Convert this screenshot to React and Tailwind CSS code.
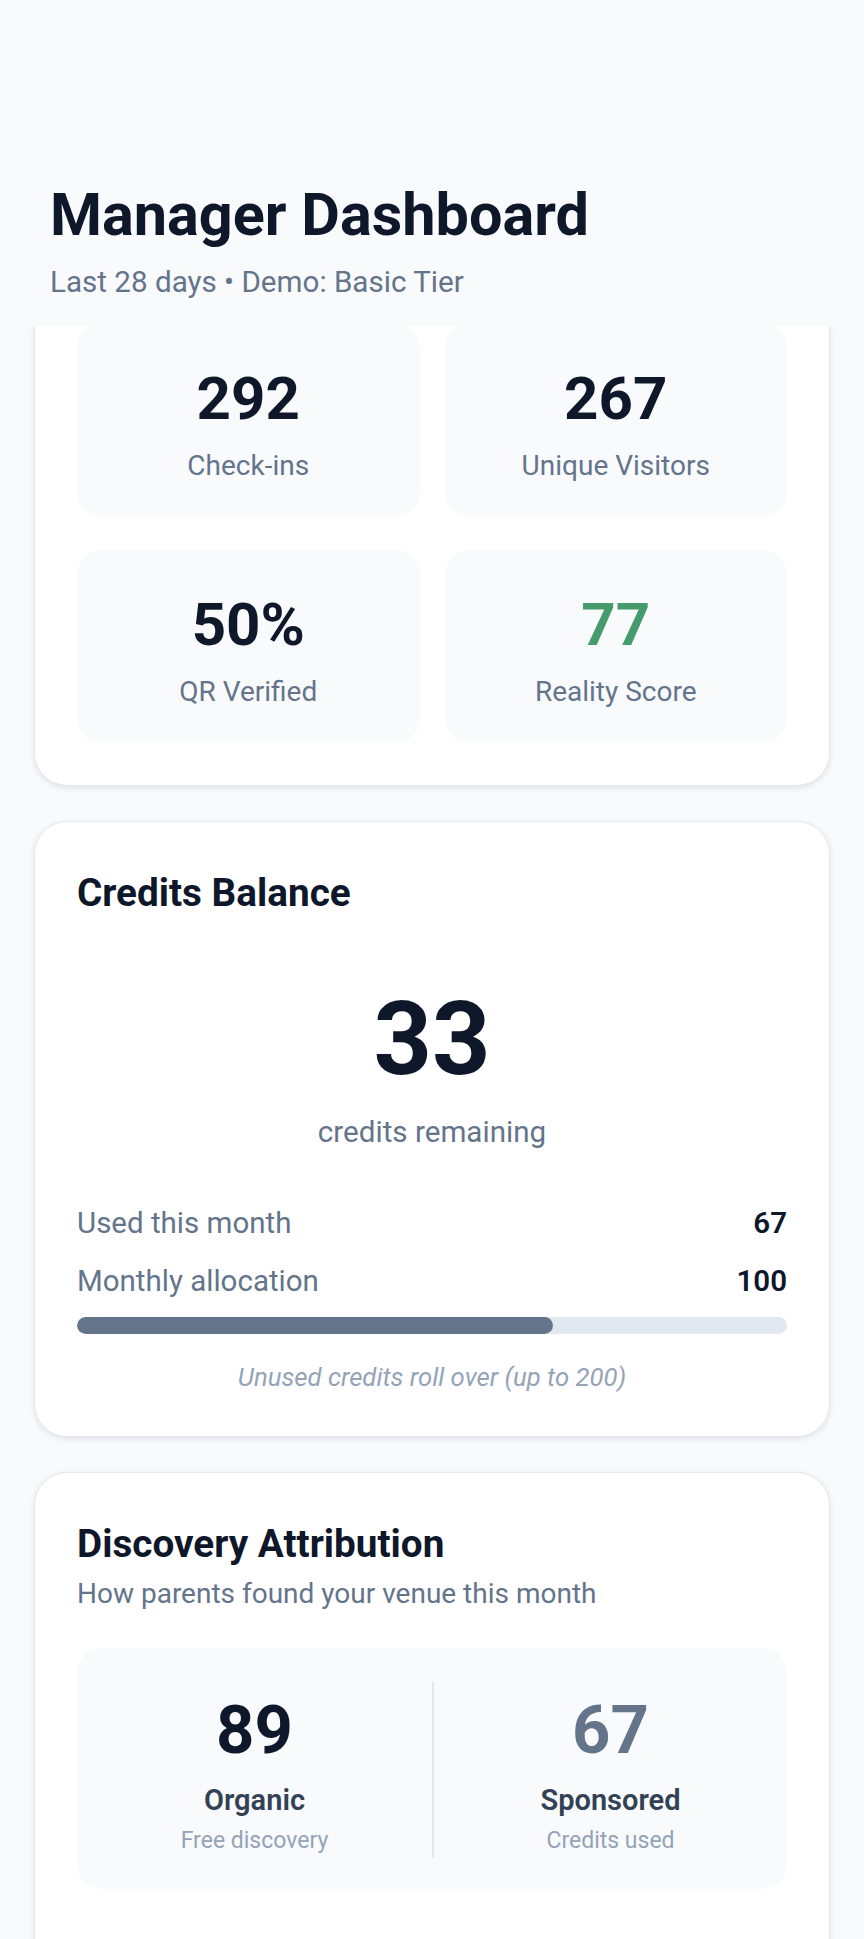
import React from 'react';

const stats = [
  { value: '292', label: 'Check-ins', color: 'text-[#0f172a]' },
  { value: '267', label: 'Unique Visitors', color: 'text-[#0f172a]' },
  { value: '50%', label: 'QR Verified', color: 'text-[#0f172a]' },
  { value: '77', label: 'Reality Score', color: 'text-[#469b6c]' },
];

function StatCard({ value, label, color }) {
  return (
    <div className="bg-[#f8fafc] rounded-[25px] pt-[39px] pb-[31px] flex flex-col items-center">
      <div className={`text-[60px] leading-[72px] font-bold ${color}`}>{value}</div>
      <div className="mt-[11px] text-[28px] leading-[40px] text-[#64748b]">{label}</div>
    </div>
  );
}

export default function App() {
  const used = 67;
  const allocation = 100;

  return (
    <div className="min-h-screen bg-[#f8fafc] font-['Roboto',sans-serif] pb-[60px]">
      <div className="relative z-10 bg-[#f8fafc] pt-[180px] pb-[23px] px-[50px]">
        <h1 className="text-[59.4px] leading-[71px] font-bold text-[#0f172a]">Manager Dashboard</h1>
        <p className="mt-[10px] text-[29.6px] leading-[42px] text-[#64748b]">Last 28 days • Demo: Basic Tier</p>
      </div>

      <div className="mx-[34px] flex flex-col gap-[35px]">
        {/* overview stats, top scrolled under the header */}
        <div className="bg-white border-x border-b border-[#e2e8f0] rounded-b-[33px] px-[42px] pb-[42px] shadow-[0_2px_6px_rgba(15,23,42,0.10)]">
          <div className="-mt-[2px] grid grid-cols-2 gap-x-[25px] gap-y-[33px]">
            {stats.map(s => (
              <StatCard key={s.label} {...s} />
            ))}
          </div>
        </div>

        {/* credits */}
        <div className="bg-white border border-[#e2e8f0] rounded-[33px] p-[42px] shadow-[0_2px_6px_rgba(15,23,42,0.10)]">
          <h2 className="text-[38.7px] leading-[58px] font-bold text-[#0f172a]">Credits Balance</h2>
          <div className="mt-[66px] flex flex-col items-center">
            <div className="text-[102px] leading-[102px] font-bold text-[#0f172a]">33</div>
            <div className="mt-[21px] text-[29.6px] leading-[42px] text-[#64748b]">credits remaining</div>
          </div>
          <div className="mt-[49px] flex flex-col gap-[16px]">
            <div className="flex justify-between items-center text-[29.5px] leading-[42px]">
              <span className="text-[#64748b]">Used this month</span>
              <span className="font-semibold text-[#0f172a]">{used}</span>
            </div>
            <div className="flex justify-between items-center text-[29.5px] leading-[42px]">
              <span className="text-[#64748b]">Monthly allocation</span>
              <span className="font-semibold text-[#0f172a]">{allocation}</span>
            </div>
          </div>
          <div className="mt-[15px] h-[17px] rounded-full bg-[#e2e8f0] overflow-hidden">
            <div className="h-full rounded-full bg-[#64748b]" style={{ width: `${(used / allocation) * 100}%` }} />
          </div>
          <p className="mt-[26px] text-center italic text-[25.7px] leading-[34px] text-[#94a3b8]">
            Unused credits roll over (up to 200)
          </p>
        </div>

        {/* discovery attribution */}
        <div className="bg-white border border-[#e2e8f0] rounded-[33px] px-[42px] pt-[42px] pb-[120px] shadow-[0_2px_6px_rgba(15,23,42,0.10)]">
          <h2 className="text-[38.7px] leading-[58px] font-bold text-[#0f172a]">Discovery Attribution</h2>
          <p className="text-[28px] leading-[42px] text-[#64748b]">How parents found your venue this month</p>
          <div className="mt-[33px] bg-[#f8fafc] rounded-[25px] pt-[34px] pb-[31px] grid grid-cols-2">
            <div className="flex flex-col items-center">
              <div className="text-[67px] leading-[97px] font-bold text-[#0f172a]">89</div>
              <div className="text-[29px] leading-[42px] font-semibold text-[#334155]">Organic</div>
              <div className="mt-[3px] text-[23px] leading-[34px] text-[#94a3b8]">Free discovery</div>
            </div>
            <div className="flex flex-col items-center border-l-2 border-[#e2e8f0]">
              <div className="text-[67px] leading-[97px] font-bold text-[#64748b]">67</div>
              <div className="text-[29px] leading-[42px] font-semibold text-[#334155]">Sponsored</div>
              <div className="mt-[3px] text-[23px] leading-[34px] text-[#94a3b8]">Credits used</div>
            </div>
          </div>
        </div>
      </div>
    </div>
  );
}
